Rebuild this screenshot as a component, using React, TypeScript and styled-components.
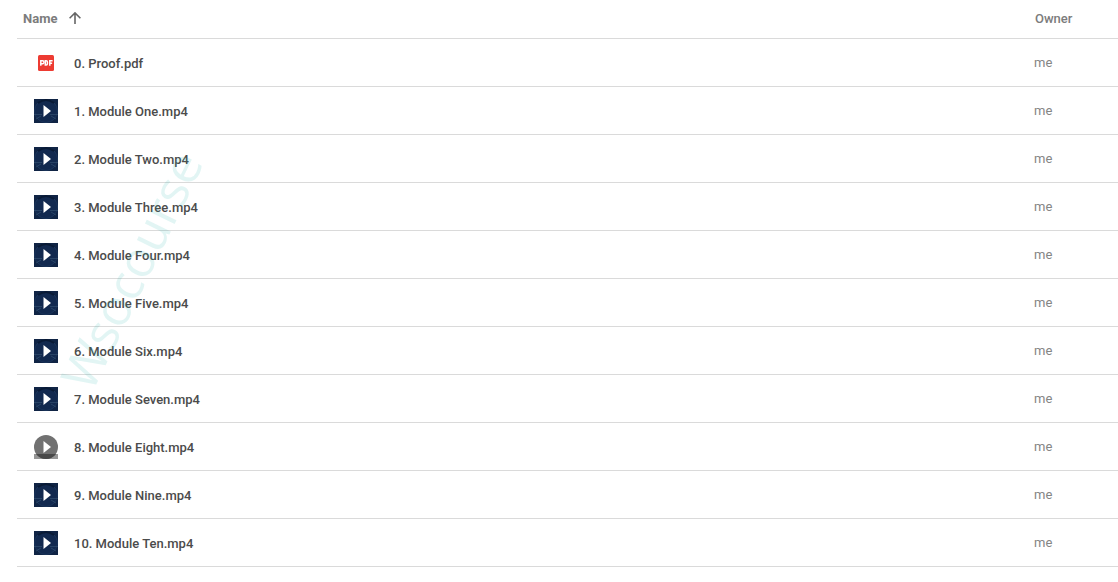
import React from "react";
import styled, { createGlobalStyle } from "styled-components";

const GlobalStyle = createGlobalStyle`
  * { box-sizing: border-box; }
  body {
    margin: 0;
    background: #ffffff;
    font-family: Roboto, "Liberation Sans", sans-serif;
    font-size: 13px;
    line-height: 16px;
    overflow-x: hidden;
  }
`;

const Page = styled.main`
  position: relative;
  padding-left: 17px;
`;

const FileTable = styled.table`
  width: 100%;
  border-collapse: separate;
  border-spacing: 0;
  table-layout: fixed;
`;

const HeaderCell = styled.th<{ $width?: string }>`
  width: ${(p) => p.$width ?? "auto"};
  height: 39px;
  padding: 0 0 0 1px;
  border-bottom: 1px solid #dadada;
  color: #7c7c7c;
  font-weight: 500;
  text-align: left;
`;

const SortButton = styled.button`
  display: flex;
  align-items: center;
  gap: 12px;
  padding: 0 0 0 5px;
  border: 0;
  background: none;
  color: inherit;
  font: inherit;
  font-weight: 700;
  cursor: pointer;
`;

const Cell = styled.td`
  height: 48px;
  padding: 0;
  border-bottom: 1px solid #dadada;
`;

const OwnerCell = styled(Cell)`
  padding-top: 1px;
  color: #858585;
`;

const FileLabel = styled.div`
  display: flex;
  align-items: center;
  gap: 16px;
  padding-left: 17px;
  color: #4b4b4b;
  font-weight: 500;
`;

const FileName = styled.span`
  padding-top: 2px;
`;

const Thumb = styled.svg`
  display: block;
  flex: none;
  width: 24px;
  height: 24px;
`;

const Watermark = styled.div`
  position: absolute;
  left: 131px;
  top: 270px;
  color: rgba(32, 178, 170, 0.13);
  font-family: "Open Sans", sans-serif;
  font-size: 50px;
  font-weight: 400;
  line-height: 60px;
  white-space: nowrap;
  transform: translate(-50%, -50%) rotate(-64deg);
  pointer-events: none;
`;

const ArrowUp = () => (
  <svg width="12" height="14" viewBox="0 0 12 14" fill="none" stroke="#666666" strokeWidth="1.6" aria-hidden="true">
    <path d="M6 12V1M.6 6.2L6 .9l5.4 5.3" />
  </svg>
);

const PdfIcon = () => (
  <Thumb viewBox="0 0 24 24" aria-hidden="true">
    <rect x="4" y="4" width="16" height="16" rx="1.5" fill="#ed3b32" />
    <g fill="none" stroke="#ffffff" strokeWidth="1.5">
      <path d="M6.8 14.8V9.8H8.6a.9.9 0 0 1 0 2.9H6.8" />
      <path d="M11.3 9.8v4.2h.9q1.2 0 1.2-1.2v-1.8q0-1.2-1.2-1.2z" />
      <path d="M15.8 14.8V9.8h2.8M15.8 12.2h2.3" />
    </g>
  </Thumb>
);

const VideoIcon = () => (
  <Thumb viewBox="0 0 24 24" aria-hidden="true">
    <rect width="24" height="24" fill="#102445" />
    <circle cx="12" cy="12" r="11.5" fill="#12294f" stroke="#203b62" strokeWidth=".7" />
    <path d="M4 4Q12-2 20 4" fill="none" stroke="#091a35" strokeWidth="2" />
    <path d="M0 15.5h8M16 15.5h8M2 20l5-3M22 20l-5-3" stroke="#385674" strokeWidth=".6" />
    <path d="M9.5 6v12l7.5-6z" fill="#ffffff" />
  </Thumb>
);

const GreyVideoIcon = () => (
  <Thumb viewBox="0 0 24 24" aria-hidden="true">
    <path d="M0 19h24v5H0z" fill="#969696" />
    <circle cx="12" cy="12" r="12" fill="#717171" />
    <path d="M2 19h20q-4 5-10 5T2 19z" fill="#484848" />
    <path d="M9.5 6v12l7.5-6z" fill="#ffffff" />
  </Thumb>
);

const icons = { pdf: PdfIcon, video: VideoIcon, grey: GreyVideoIcon };

const files: { name: string; kind: keyof typeof icons }[] = [
  { name: "0. Proof.pdf", kind: "pdf" },
  { name: "1. Module One.mp4", kind: "video" },
  { name: "2. Module Two.mp4", kind: "video" },
  { name: "3. Module Three.mp4", kind: "video" },
  { name: "4. Module Four.mp4", kind: "video" },
  { name: "5. Module Five.mp4", kind: "video" },
  { name: "6. Module Six.mp4", kind: "video" },
  { name: "7. Module Seven.mp4", kind: "video" },
  { name: "8. Module Eight.mp4", kind: "grey" },
  { name: "9. Module Nine.mp4", kind: "video" },
  { name: "10. Module Ten.mp4", kind: "video" },
];

export default function App() {
  return (
    <Page>
      <GlobalStyle />
      <FileTable>
        <thead>
          <tr>
            <HeaderCell aria-sort="ascending">
              <SortButton type="button">
                Name
                <ArrowUp />
              </SortButton>
            </HeaderCell>
            <HeaderCell $width="84px">Owner</HeaderCell>
          </tr>
        </thead>
        <tbody>
          {files.map(({ name, kind }) => {
            const Icon = icons[kind];
            return (
              <tr key={name}>
                <Cell>
                  <FileLabel>
                    <Icon />
                    <FileName>{name}</FileName>
                  </FileLabel>
                </Cell>
                <OwnerCell>me</OwnerCell>
              </tr>
            );
          })}
        </tbody>
      </FileTable>
      <Watermark>Wsocourse</Watermark>
    </Page>
  );
}
